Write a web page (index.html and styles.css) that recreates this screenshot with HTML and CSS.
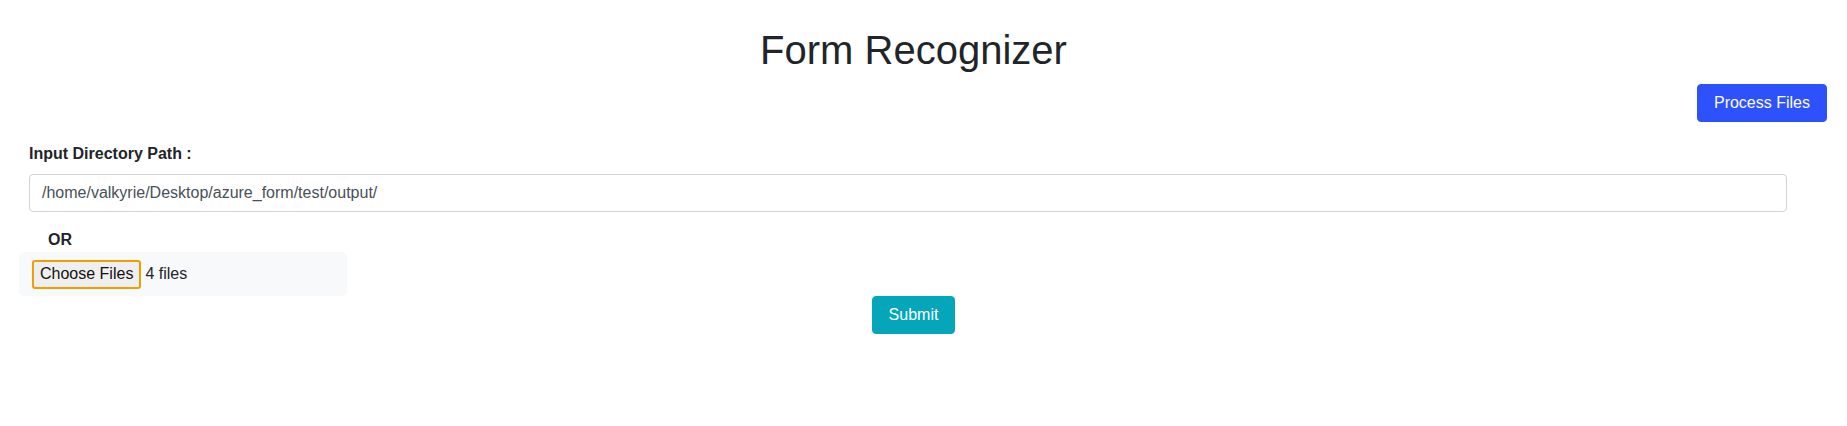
FILE: index.html
```html
<!DOCTYPE html>
<html lang="en">
<head>
<meta charset="utf-8">
<title>Form Recognizer</title>
<link rel="stylesheet" href="styles.css">
</head>
<body>
<div class="page">
  <h1 class="title">Form Recognizer</h1>
  <div class="actions">
    <button class="btn btn-primary" type="button">Process Files</button>
  </div>
  <form class="form">
    <div class="field">
      <label class="label" for="dir">Input Directory Path :</label>
      <input class="text-input" id="dir" type="text" value="/home/valkyrie/Desktop/azure_form/test/output/">
    </div>
    <div class="or">OR</div>
    <div class="file-box">
      <button class="file-btn" type="button">Choose Files</button>
      <span class="file-count">4 files</span>
    </div>
    <div class="submit-row">
      <button class="btn btn-info" type="submit">Submit</button>
    </div>
  </form>
</div>
</body>
</html>
```

FILE: styles.css
```css
* { box-sizing: border-box; }
html, body { margin: 0; padding: 0; background: #fff; }
body {
  font-family: "Liberation Sans", Arial, sans-serif;
  font-size: 16px;
  line-height: 1.5;
  color: #212529;
}
.page {
  padding: 26px 20px 0 0;
}
.title {
  margin: 0;
  font-size: 40px;
  font-weight: 400;
  line-height: 48px;
  text-align: center;
  color: #212529;
}
.actions {
  display: flex;
  justify-content: flex-end;
  margin-top: 10px;
}
.btn {
  font-family: "Liberation Sans", Arial, sans-serif;
  font-size: 16px;
  line-height: 24px;
  padding: 6px 16px;
  border: 1px solid transparent;
  border-radius: 4px;
  color: #fff;
  cursor: pointer;
}
.btn-primary {
  background: #2e51fe;
  border-color: #2e51fe;
}
.btn-info {
  background: #05a5ba;
  border-color: #05a5ba;
}
.form {
  margin-top: 20px;
}
.field {
  display: flex;
  flex-direction: column;
  padding-left: 29px;
  width: 1787px;
}
.label {
  font-weight: 700;
  line-height: 24px;
  margin-bottom: 8px;
}
.text-input {
  height: 38px;
  padding: 6px 12px;
  font-family: "Liberation Sans", Arial, sans-serif;
  font-size: 16px;
  line-height: 24px;
  color: #495057;
  border: 1px solid #ced4da;
  border-radius: 4px;
  background: #fff;
}
.or {
  margin-top: 16px;
  padding-left: 48px;
  font-weight: 700;
  line-height: 24px;
}
.file-box {
  display: flex;
  align-items: center;
  gap: 4px;
  margin-left: 19px;
  width: 328px;
  height: 44px;
  padding: 0 13px;
  background: #f8f9fa;
  border-radius: 5px;
}
.file-btn {
  height: 29px;
  padding: 0 6px;
  font-family: "Liberation Sans", Arial, sans-serif;
  font-size: 16px;
  line-height: 18px;
  color: #111;
  background: #efefef;
  border: 2px solid #f09e00;
  border-radius: 3px;
}
.file-count {
  font-size: 16px;
  color: #212529;
}
.submit-row {
  display: flex;
  justify-content: center;
}
```
